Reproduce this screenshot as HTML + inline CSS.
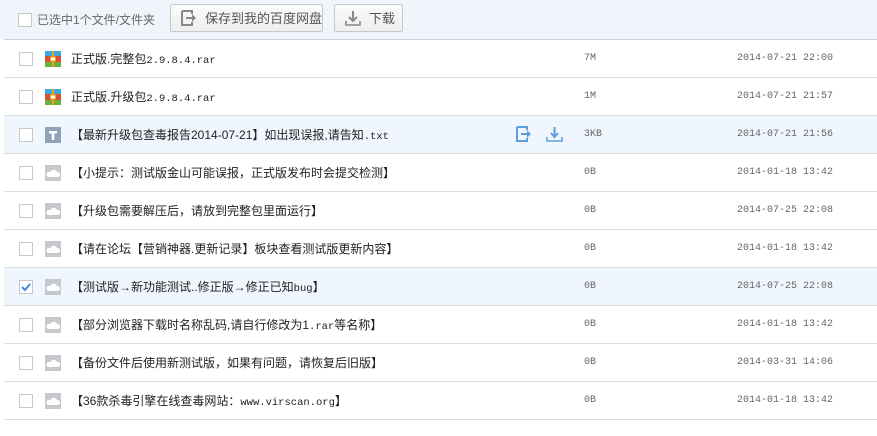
<!DOCTYPE html>
<html><head><meta charset="utf-8"><style>
*{margin:0;padding:0;box-sizing:border-box}
body{width:877px;height:436px;background:#fff;font-family:"Liberation Sans","Noto Sans CJK SC",sans-serif;font-size:12px;color:#333;position:relative;overflow:hidden}
.hdr{position:absolute;left:0;top:0;width:877px;height:39px;background:#f0f4fb}
.hline{position:absolute;left:4px;top:39px;width:873px;height:1px;background:#ccd3dc}
.cb{position:absolute;width:14px;height:14px;border:1px solid #c8c8c8;background:#fff}
.btn{position:absolute;top:4px;height:28px;border:1px solid #c5c9ce;border-radius:2px;background:linear-gradient(#fbfbfb,#eeeeee);color:#555;font-size:13px;line-height:26px}
.row{position:absolute;left:4px;width:873px;height:38px;border-bottom:1px solid #dcdcdc}
.row.hl{background:#f0f6fd}
.row .cb{left:15px;top:12px}
.ic{position:absolute;left:41px;top:11px;width:16px;height:16px}
.nm{position:absolute;left:67px;top:11px;line-height:16px;font-size:12px;color:#222;white-space:nowrap}
.sz{position:absolute;left:580px;top:11px;line-height:16px;color:#666;font-family:"Liberation Mono",monospace;font-size:10px}
.dt{position:absolute;left:733px;top:11px;line-height:16px;color:#666;font-family:"Liberation Mono",monospace;font-size:10px}
.m{font-family:"Liberation Mono",monospace;font-size:10.5px}
</style></head><body>
<div class="hdr">
<div class="cb" style="left:18px;top:13px"></div>
<div style="position:absolute;left:37px;top:12px;line-height:16px;color:#666;font-size:12px">已选中1个文件/文件夹</div>
<div class="btn" style="left:170px;width:153px">
<svg style="position:absolute;left:10px;top:5px" width="16" height="16" viewBox="0 0 16 16"><path d="M1 1h10v3M1 1v14h10v-3" fill="none" stroke="#888" stroke-width="2"/><path d="M5 7h6V4l4 4-4 4V9H5z" fill="#888"/></svg>
<span style="position:absolute;left:34px;top:1px">保存到我的百度网盘</span></div>
<div class="btn" style="left:334px;width:69px">
<svg style="position:absolute;left:10px;top:5px" width="16" height="16" viewBox="0 0 16 16"><path d="M8 1v9M4 7l4 4 4-4" fill="none" stroke="#888" stroke-width="2"/><path d="M1 11v4h14v-4" fill="none" stroke="#888" stroke-width="1.5"/></svg>
<span style="position:absolute;left:34px;top:1px">下载</span></div>
</div>
<div class="hline"></div>

<div class="row" style="top:40px"><div class="cb"></div>
<svg class="ic" viewBox="0 0 16 16"><rect width="16" height="5" y="0" fill="#3ba9e0"/><rect width="16" height="6" y="5" fill="#d9502e"/><rect width="16" height="5" y="11" fill="#6ab03c"/><rect x="7" width="2" height="16" fill="#f0a020"/><rect x="5.5" y="6" width="5" height="4" fill="#fff" stroke="#f0a020"/></svg>
<div class="nm">正式版.完整包<span class="m">2.9.8.4.rar</span></div><div class="sz">7M</div><div class="dt">2014-07-21 22:00</div></div>

<div class="row" style="top:78px"><div class="cb"></div>
<svg class="ic" viewBox="0 0 16 16"><rect width="16" height="5" y="0" fill="#3ba9e0"/><rect width="16" height="6" y="5" fill="#d9502e"/><rect width="16" height="5" y="11" fill="#6ab03c"/><rect x="7" width="2" height="16" fill="#f0a020"/><rect x="5.5" y="6" width="5" height="4" fill="#fff" stroke="#f0a020"/></svg>
<div class="nm">正式版.升级包<span class="m">2.9.8.4.rar</span></div><div class="sz">1M</div><div class="dt">2014-07-21 21:57</div></div>

<div class="row hl" style="top:116px"><div class="cb"></div>
<svg class="ic" viewBox="0 0 16 16"><rect width="16" height="16" fill="#8fa3b8"/><path d="M4 4h8v2.5H9.3V13H6.7V6.5H4z" fill="#fff"/></svg>
<div class="nm">【最新升级包查毒报告2014-07-21】如出现误报,请告知<span class="m">.txt</span></div>
<svg style="position:absolute;left:512px;top:10px" width="16" height="16" viewBox="0 0 16 16"><path d="M1 1h10v3M1 1v14h10v-3" fill="none" stroke="#5c9de0" stroke-width="2"/><path d="M5 7h6V4l4 4-4 4V9H5z" fill="#5c9de0"/></svg>
<svg style="position:absolute;left:542px;top:10px" width="17" height="16" viewBox="0 0 17 16"><path d="M8.5 1v9M5 7l3.5 4 3.5-4" fill="none" stroke="#5c9de0" stroke-width="2"/><path d="M1 11v4h15v-4" fill="none" stroke="#5c9de0" stroke-width="1.5"/></svg>
<div class="sz">3KB</div><div class="dt">2014-07-21 21:56</div></div>

<div class="row" style="top:154px"><div class="cb"></div><svg class="ic" viewBox="0 0 16 16"><rect width="16" height="16" fill="#c5c8cc"/><path d="M3 12h10a2.5 2.5 0 0 0-1-5 3.5 3.5 0 0 0-6.5 0A2.5 2.5 0 0 0 3 12z" fill="#fff"/></svg>
<div class="nm">【小提示：测试版金山可能误报，正式版发布时会提交检测】</div><div class="sz">0B</div><div class="dt">2014-01-18 13:42</div></div>

<div class="row" style="top:192px"><div class="cb"></div><svg class="ic" viewBox="0 0 16 16"><rect width="16" height="16" fill="#c5c8cc"/><path d="M3 12h10a2.5 2.5 0 0 0-1-5 3.5 3.5 0 0 0-6.5 0A2.5 2.5 0 0 0 3 12z" fill="#fff"/></svg>
<div class="nm">【升级包需要解压后，请放到完整包里面运行】</div><div class="sz">0B</div><div class="dt">2014-07-25 22:08</div></div>

<div class="row" style="top:230px"><div class="cb"></div><svg class="ic" viewBox="0 0 16 16"><rect width="16" height="16" fill="#c5c8cc"/><path d="M3 12h10a2.5 2.5 0 0 0-1-5 3.5 3.5 0 0 0-6.5 0A2.5 2.5 0 0 0 3 12z" fill="#fff"/></svg>
<div class="nm">【请在论坛【营销神器.更新记录】板块查看测试版更新内容】</div><div class="sz">0B</div><div class="dt">2014-01-18 13:42</div></div>

<div class="row hl" style="top:268px"><div class="cb"><svg width="12" height="12" viewBox="0 0 12 12" style="position:absolute;left:0;top:0"><path d="M2 6l3 3 5-6" fill="none" stroke="#3a8ee6" stroke-width="2"/></svg></div><svg class="ic" viewBox="0 0 16 16"><rect width="16" height="16" fill="#c5c8cc"/><path d="M3 12h10a2.5 2.5 0 0 0-1-5 3.5 3.5 0 0 0-6.5 0A2.5 2.5 0 0 0 3 12z" fill="#fff"/></svg>
<div class="nm">【测试版→新功能测试..修正版→修正已知<span class="m">bug</span>】</div><div class="sz">0B</div><div class="dt">2014-07-25 22:08</div></div>

<div class="row" style="top:306px"><div class="cb"></div><svg class="ic" viewBox="0 0 16 16"><rect width="16" height="16" fill="#c5c8cc"/><path d="M3 12h10a2.5 2.5 0 0 0-1-5 3.5 3.5 0 0 0-6.5 0A2.5 2.5 0 0 0 3 12z" fill="#fff"/></svg>
<div class="nm">【部分浏览器下载时名称乱码,请自行修改为1<span class="m">.rar</span>等名称】</div><div class="sz">0B</div><div class="dt">2014-01-18 13:42</div></div>

<div class="row" style="top:344px"><div class="cb"></div><svg class="ic" viewBox="0 0 16 16"><rect width="16" height="16" fill="#c5c8cc"/><path d="M3 12h10a2.5 2.5 0 0 0-1-5 3.5 3.5 0 0 0-6.5 0A2.5 2.5 0 0 0 3 12z" fill="#fff"/></svg>
<div class="nm">【备份文件后使用新测试版，如果有问题，请恢复后旧版】</div><div class="sz">0B</div><div class="dt">2014-03-31 14:06</div></div>

<div class="row" style="top:382px"><div class="cb"></div><svg class="ic" viewBox="0 0 16 16"><rect width="16" height="16" fill="#c5c8cc"/><path d="M3 12h10a2.5 2.5 0 0 0-1-5 3.5 3.5 0 0 0-6.5 0A2.5 2.5 0 0 0 3 12z" fill="#fff"/></svg>
<div class="nm">【36款杀毒引擎在线查毒网站：<span class="m">www.virscan.org</span>】</div><div class="sz">0B</div><div class="dt">2014-01-18 13:42</div></div>
</body></html>
